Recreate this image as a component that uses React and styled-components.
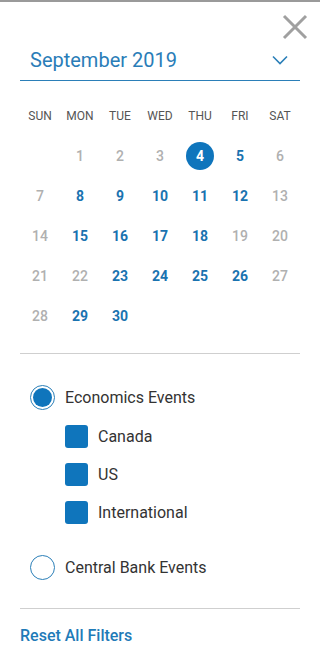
import styled, { createGlobalStyle } from 'styled-components';

const GlobalStyle = createGlobalStyle`
  body {
    margin: 0;
    background: #fff;
    font-family: Roboto, "Noto Sans", sans-serif;
  }
`;

const blue = '#0f75bc';

const Panel = styled.div`
  width: 320px;
  height: 663px;
  box-sizing: border-box;
  border-top: 2px solid #9a9a9a;
  padding: 0 20px;
  background: #fff;
`;

const TopBar = styled.div`
  height: 38px;
  display: flex;
  justify-content: flex-end;
  align-items: flex-end;
`;

const CloseButton = styled.button`
  border: none;
  background: none;
  padding: 0;
  margin-right: -8px;
  width: 26px;
  height: 26px;
  cursor: pointer;
  display: flex;
`;

const MonthSelect = styled.div`
  height: 40px;
  display: flex;
  align-items: center;
  justify-content: space-between;
  padding: 0 12px 0 10px;
  border-bottom: 1px solid #2b7fb8;
`;

const MonthText = styled.span`
  font-size: 20px;
  color: #2a7db8;
`;

const Grid = styled.div`
  display: grid;
  grid-template-columns: repeat(7, 40px);
  grid-auto-rows: 40px;
  margin-top: 15px;
`;

const DayName = styled.div`
  display: flex;
  align-items: center;
  justify-content: center;
  font-size: 12px;
  color: #555;
`;

const Day = styled.div`
  display: flex;
  align-items: center;
  justify-content: center;
`;

const DayNum = styled.span`
  width: 28px;
  height: 28px;
  border-radius: 50%;
  display: flex;
  align-items: center;
  justify-content: center;
  font-size: 14px;
  font-weight: ${(p) => (p.$active ? 700 : 500)};
  color: ${(p) => (p.$selected ? '#fff' : p.$active ? '#1a73b0' : '#b0b0b0')};
  background: ${(p) => (p.$selected ? blue : 'transparent')};
`;

const Divider = styled.hr`
  border: none;
  border-top: 1px solid #cfcfcf;
  margin: ${(p) => p.$margin};
`;

const Options = styled.div`
  display: flex;
  flex-direction: column;
  padding-left: 10px;
`;

const RadioRow = styled.label`
  display: flex;
  align-items: center;
  gap: 10px;
  height: 40px;
  font-size: 16px;
  color: #333;
  margin-top: ${(p) => p.$top || 0};
`;

const Radio = styled.span`
  width: 25px;
  height: 25px;
  box-sizing: border-box;
  border-radius: 50%;
  border: 1.5px solid #2b7fb8;
  padding: 2px;
  display: flex;

  &::after {
    content: '';
    flex: 1;
    border-radius: 50%;
    background: ${(p) => (p.$checked ? blue : 'transparent')};
  }
`;

const CheckRow = styled.label`
  display: flex;
  align-items: center;
  gap: 10px;
  height: 38px;
  padding-left: 35px;
  font-size: 16px;
  color: #333;
`;

const Check = styled.span`
  width: 23px;
  height: 23px;
  border-radius: 3px;
  background: ${blue};
`;

const ResetLink = styled.a`
  display: block;
  font-size: 16px;
  font-weight: 500;
  color: #1f7bb8;
  text-decoration: none;
`;

const weekDays = ['SUN', 'MON', 'TUE', 'WED', 'THU', 'FRI', 'SAT'];
const activeDays = [4, 5, 8, 9, 10, 11, 12, 15, 16, 17, 18, 23, 24, 25, 26, 29, 30];

const App = () => {
  const cells = [null];
  for (let d = 1; d <= 30; d++) cells.push(d);

  return (
    <>
      <GlobalStyle />
      <Panel>
        <TopBar>
          <CloseButton aria-label="Close">
            <svg width="26" height="26" viewBox="0 0 26 26">
              <path d="M2 2 L24 24 M24 2 L2 24" stroke="#a0a0a0" strokeWidth="3" />
            </svg>
          </CloseButton>
        </TopBar>
        <MonthSelect>
          <MonthText>September 2019</MonthText>
          <svg width="16" height="10" viewBox="0 0 16 10">
            <path d="M1 1.5 L8 8.5 L15 1.5" fill="none" stroke="#2b7fb8" strokeWidth="1.6" />
          </svg>
        </MonthSelect>
        <Grid>
          {weekDays.map((w) => (
            <DayName key={w}>{w}</DayName>
          ))}
          {cells.map((d, i) => (
            <Day key={i}>
              {d && (
                <DayNum $active={activeDays.includes(d)} $selected={d === 4}>
                  {d}
                </DayNum>
              )}
            </Day>
          ))}
        </Grid>
        <Divider $margin="17px 0 0" />
        <Options>
          <RadioRow $top="23px">
            <Radio $checked />
            Economics Events
          </RadioRow>
          <CheckRow>
            <Check />
            Canada
          </CheckRow>
          <CheckRow>
            <Check />
            US
          </CheckRow>
          <CheckRow>
            <Check />
            International
          </CheckRow>
          <RadioRow $top="16px">
            <Radio />
            Central Bank Events
          </RadioRow>
        </Options>
        <Divider $margin="21px 0 17px" />
        <ResetLink href="#">Reset All Filters</ResetLink>
      </Panel>
    </>
  );
};

export default App;
